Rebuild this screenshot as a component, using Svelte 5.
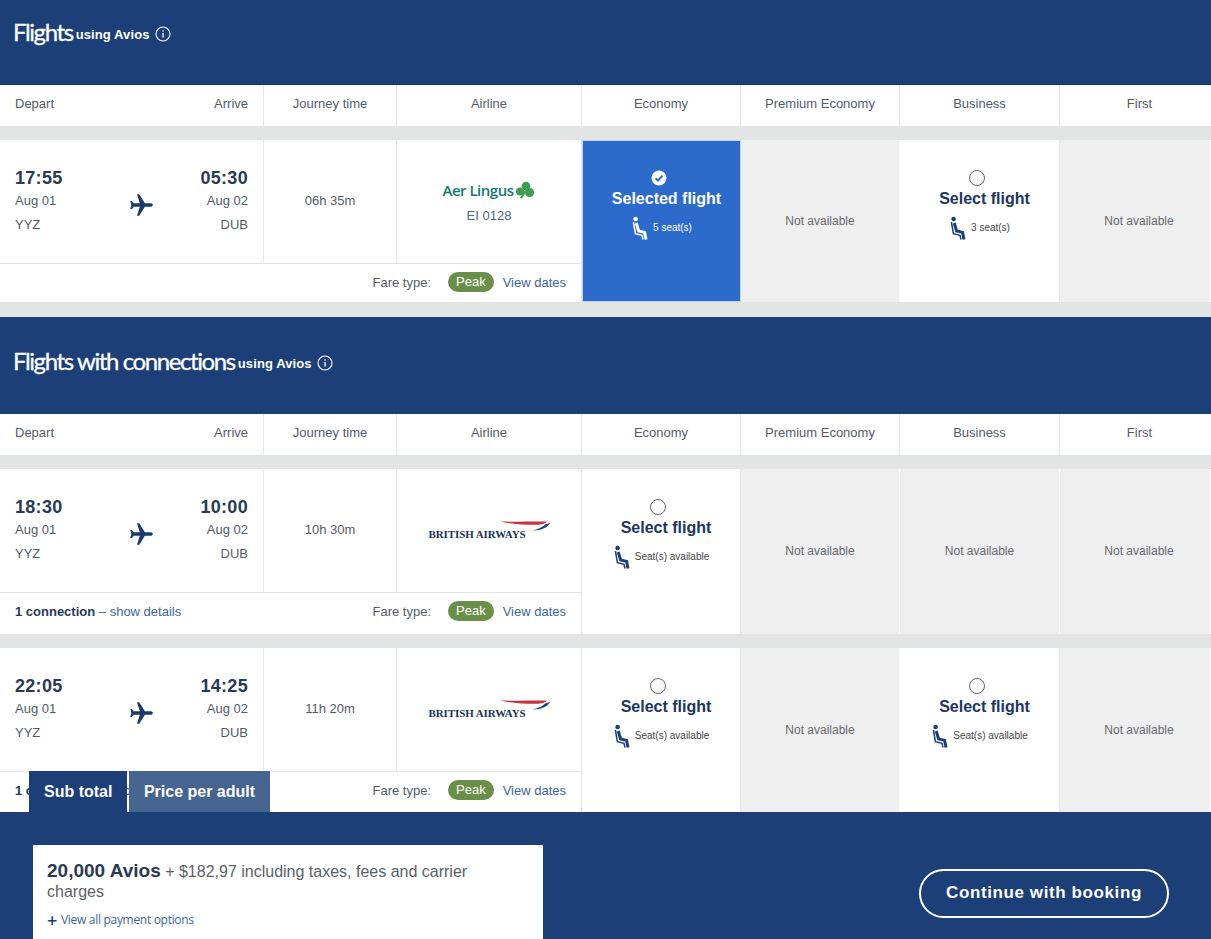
<script>
  const columns = ["Journey time", "Airline", "Economy", "Premium Economy", "Business", "First"];

  const direct = [
    {
      depart: "17:55",
      arrive: "05:30",
      duration: "06h 35m",
      airline: "aer",
      fares: [{ state: "selected", seats: "5 seat(s)" }, null, { state: "open", seats: "3 seat(s)" }, null],
    },
  ];

  const connecting = [
    {
      depart: "18:30",
      arrive: "10:00",
      duration: "10h 30m",
      airline: "ba",
      connection: true,
      tall: true,
      fares: [{ state: "open", seats: "Seat(s) available" }, null, null, null],
    },
    {
      depart: "22:05",
      arrive: "14:25",
      duration: "11h 20m",
      airline: "ba",
      connection: true,
      fares: [{ state: "open", seats: "Seat(s) available" }, null, { state: "open", seats: "Seat(s) available" }, null],
    },
  ];

  const planePath =
    "M21 16v-2l-8-5V3.5c0-.83-.67-1.5-1.5-1.5S10 2.67 10 3.5V9l-8 5v2l8-2.5V19l-2 1.5V22l3.5-1 3.5 1v-1.5L13 19v-5.5l8 2.5z";
</script>

{#snippet info()}
  <svg class="info" viewBox="0 0 16 16" width="16" height="16" aria-hidden="true">
    <circle cx="8" cy="8" r="7" fill="none" stroke="currentColor" stroke-width="1.1" />
    <rect x="7.4" y="7" width="1.3" height="4.6" fill="currentColor" />
    <rect x="7.4" y="4.2" width="1.3" height="1.4" fill="currentColor" />
  </svg>
{/snippet}

{#snippet seat()}
  <svg class="seat" viewBox="0 0 16 24" width="16" height="24" aria-hidden="true">
    <circle cx="3.6" cy="3" r="2.3" fill="currentColor" />
    <path d="M1.4 6 L3.4 17.6 L10 19.4 L11 23.5" fill="none" stroke="currentColor" stroke-width="1.5" />
    <path d="M4.2 7 L6.6 15 L12.6 16.4 L14 23.5" fill="none" stroke="currentColor" stroke-width="3" />
  </svg>
{/snippet}

{#snippet tableHead()}
  <div class="grid head">
    <div class="cell times-head"><span>Depart</span><span>Arrive</span></div>
    {#each columns as c}
      <div class="cell">{c}</div>
    {/each}
  </div>
{/snippet}

{#snippet flightRow(f)}
  <div class="strip"></div>
  <div class="grid row" class:tall={f.tall} class:connected={f.connection}>
    <div class="info-block">
      <div class="upper">
        <div class="times">
          <div class="end">
            <strong>{f.depart}</strong>
            <span>Aug 01</span>
            <span>YYZ</span>
          </div>
          <svg class="plane" viewBox="0 0 24 24" width="27" height="27" aria-hidden="true">
            <path d={planePath} fill="#1b3a6b" transform="rotate(90 12 12)" />
          </svg>
          <div class="end right">
            <strong>{f.arrive}</strong>
            <span>Aug 02</span>
            <span>DUB</span>
          </div>
        </div>
        <div class="duration">{f.duration}</div>
        <div class="airline">
          {#if f.airline === "aer"}
            <div class="aer">
              Aer Lingus
              <svg viewBox="0 0 20 18" width="20" height="18" aria-hidden="true">
                <g fill="#3f9e4c">
                  <circle cx="11" cy="5" r="4.3" />
                  <circle cx="5" cy="10.5" r="4" />
                  <circle cx="14.5" cy="11.5" r="4.6" />
                  <path d="M9 10 L5 17 L7 17.5 L11 11 Z" />
                </g>
              </svg>
            </div>
            <div class="code">EI 0128</div>
          {:else}
            <div class="ba">
              <span>BRITISH AIRWAYS</span>
              <svg viewBox="0 0 50 18" width="50" height="18" aria-hidden="true">
                <path d="M0 1.5 C14 2 34 1.2 47 1.5 C46 3 42 4.8 36 4.8 C22 4.8 10 3.5 0 1.5 Z" fill="#c8323f" />
                <path d="M50 3 C48 7 42 10.5 32 10.5 C38 9.5 43 7 45 4.5 Z" fill="#1d3f78" />
              </svg>
            </div>
          {/if}
        </div>
      </div>
      <div class="fare-row">
        {#if f.connection}
          <div class="connection"><b>1 connection</b> – <span>show details</span></div>
        {/if}
        <span class="fare-label">Fare type:</span>
        <span class="peak">Peak</span>
        <span class="dates">View dates</span>
      </div>
    </div>
    {#each f.fares as fare}
      {#if !fare}
        <div class="fare none">Not available</div>
      {:else}
        <div class="fare" class:selected={fare.state === "selected"}>
          {#if fare.state === "selected"}
            <svg class="radio" viewBox="0 0 16 16" width="16" height="16" aria-hidden="true">
              <circle cx="8" cy="8" r="7.5" fill="#fff" />
              <path d="M4.6 8.2 L7 10.6 L11.4 5.6" fill="none" stroke="#2c6bcc" stroke-width="2" />
            </svg>
          {:else}
            <span class="radio empty"></span>
          {/if}
          <div class="fare-title">{fare.state === "selected" ? "Selected flight" : "Select flight"}</div>
          <div class="seats">
            {@render seat()}
            <span>{fare.seats}</span>
          </div>
        </div>
      {/if}
    {/each}
  </div>
{/snippet}

<div class="page">
  <header class="section first">
    <h2>Flights</h2>
    <span class="using">using Avios</span>
    {@render info()}
  </header>
  {@render tableHead()}
  {#each direct as f}
    {@render flightRow(f)}
  {/each}
  <div class="strip gap"></div>

  <header class="section second">
    <h2>Flights with connections</h2>
    <span class="using">using Avios</span>
    {@render info()}
  </header>
  {@render tableHead()}
  {#each connecting as f}
    {@render flightRow(f)}
  {/each}

  <footer>
    <div class="tabs">
      <div class="tab active">Sub total</div>
      <div class="tab">Price per adult</div>
    </div>
    <div class="price-card">
      <p><strong>20,000 Avios</strong> + $182,97 including taxes, fees and carrier charges</p>
      <div class="payment"><span class="plus">+</span> View all payment options</div>
    </div>
    <button class="continue">Continue with booking</button>
  </footer>
</div>

<style>
  :global(body) {
    margin: 0;
    background: #fff;
    font-family: "Liberation Sans", Arial, sans-serif;
    color: #555b66;
  }

  .page {
    width: 1211px;
    height: 939px;
    overflow: hidden;
  }

  .section {
    display: flex;
    align-items: center;
    gap: 3px;
    box-sizing: border-box;
    padding-left: 13px;
    background: #1b3f76;
    color: #fff;
  }

  .section.first {
    height: 85px;
    padding-bottom: 21px;
    border-bottom: 1px solid #16335f;
  }

  .section.second {
    height: 97px;
    padding-bottom: 11px;
  }

  h2 {
    margin: 0;
    font-family: Lato, sans-serif;
    font-weight: 400;
    font-size: 24px;
    letter-spacing: -1.4px;
    color: #fff;
    -webkit-text-stroke: 0.3px #fff;
  }

  .using {
    font-size: 13px;
    font-weight: 700;
    letter-spacing: 0.1px;
    margin-top: 6px;
  }

  .info {
    margin: 5px 0 0 2px;
  }

  .grid {
    display: grid;
    grid-template-columns: 264px 133px 185px 159px 159px 160px 151px;
  }

  .head {
    height: 41px;
    font-size: 13px;
    color: #555b66;
  }

  .cell {
    display: flex;
    align-items: center;
    justify-content: center;
    padding-bottom: 4px;
    box-sizing: border-box;
    border-right: 1px solid #e8e8e8;
  }

  .cell:last-child {
    border-right: 0;
    padding-left: 8px;
  }

  .times-head {
    justify-content: space-between;
    padding-left: 15px;
    padding-right: 15px;
  }

  .strip {
    height: 14px;
    background: #e3e4e4;
  }

  .strip.gap {
    height: 15px;
  }

  .row {
    height: 162px;
  }

  .row.tall {
    height: 165px;
  }

  .row.connected:not(.tall) {
    height: 164px;
  }

  .info-block {
    grid-column: 1 / 4;
    display: flex;
    flex-direction: column;
    border-right: 1px solid #e8e8e8;
  }

  .upper {
    display: grid;
    grid-template-columns: 264px 133px 1fr;
    height: 124px;
    box-sizing: border-box;
    border-bottom: 1px solid #e4e4e4;
    flex: none;
  }

  .times {
    display: flex;
    justify-content: space-between;
    align-items: center;
    padding: 0 15px;
    border-right: 1px solid #e8e8e8;
  }

  .end {
    display: flex;
    flex-direction: column;
    font-size: 13px;
    width: 70px;
    margin-top: 2px;
  }

  .end strong {
    font-size: 18px;
    line-height: 21px;
    color: #2a3a55;
    letter-spacing: 0.3px;
  }

  .end span {
    line-height: 24px;
  }

  .end.right {
    align-items: flex-end;
  }

  .plane {
    margin: 7px 0 0 20px;
  }

  .duration {
    display: flex;
    align-items: center;
    justify-content: center;
    font-size: 13px;
    border-right: 1px solid #e8e8e8;
    padding-bottom: 3px;
  }

  .airline {
    display: flex;
    flex-direction: column;
    align-items: center;
    justify-content: center;
  }

  .aer {
    display: flex;
    align-items: center;
    gap: 2px;
    margin-top: -1px;
    font-family: "Open Sans", sans-serif;
    font-size: 15px;
    letter-spacing: -0.5px;
    font-weight: 600;
    color: #117a6a;
  }

  .code {
    margin-top: 8px;
    font-size: 13px;
    color: #567;
  }

  .ba {
    display: flex;
    align-items: flex-start;
    margin-bottom: 2px;
  }

  .ba span {
    font-family: "Liberation Serif", serif;
    font-weight: 700;
    font-size: 11px;
    color: #1d3358;
    margin-top: 8px;
    white-space: nowrap;
    letter-spacing: -0.1px;
  }

  .ba svg {
    margin-left: -26px;
  }

  .fare-row {
    flex: 1;
    display: flex;
    align-items: center;
    justify-content: flex-end;
    padding-right: 15px;
    padding-bottom: 2px;
    font-size: 13px;
  }

  .connected .fare-row {
    padding-bottom: 4px;
  }

  .tall .fare-row {
    padding-bottom: 5px;
  }

  .connection {
    margin-right: auto;
    padding-left: 15px;
    color: #3e6699;
  }

  .connection b {
    color: #2a3a55;
  }

  .peak {
    margin: 0 9px 0 17px;
    padding: 0 8px;
    line-height: 20px;
    border-radius: 10px;
    background: #6a8f48;
    color: #fff;
  }

  .dates {
    color: #3e6699;
  }

  .fare {
    display: flex;
    flex-direction: column;
    align-items: center;
    box-sizing: border-box;
    padding: 30px 0 0 10px;
    border-right: 1px solid #e8e8e8;
    color: #20365f;
  }

  .fare:last-child {
    border-right: 0;
  }

  .fare.none {
    justify-content: center;
    padding: 0;
    background: #efefef;
    border-right: 1px solid #fff;
    font-size: 12px;
    color: #66696e;
  }

  .tall .fare.none {
    padding-bottom: 2px;
  }

  .fare.none:last-child {
    padding-left: 8px;
  }

  .fare.selected {
    padding-top: 29px;
    background: #2c6bcc;
    color: #fff;
    border: 1px solid #bcd4f0;
  }

  .radio {
    display: block;
    margin-right: 16px;
    height: 16px;
  }

  .radio.empty {
    box-sizing: border-box;
    width: 16px;
    border: 1px solid #666;
    border-radius: 50%;
    background: #fff;
  }

  .fare-title {
    margin-top: 3px;
    font-size: 16px;
    line-height: 19px;
    font-weight: 700;
  }

  .seats {
    display: flex;
    align-items: center;
    gap: 5px;
    margin: 6px 9px 0 0;
    font-size: 10px;
    color: #444;
  }

  .selected .seats {
    color: #fff;
  }

  .seat {
    color: #1b3f76;
    margin-top: 2px;
  }

  .selected .seat {
    color: #fff;
  }

  footer {
    position: relative;
    display: flex;
    justify-content: space-between;
    box-sizing: border-box;
    height: 128px;
    padding: 33px 42px 0 33px;
    background: #1b3f76;
  }

  .tabs {
    position: absolute;
    left: 29px;
    top: -41px;
    display: flex;
    gap: 2px;
  }

  .tab {
    height: 41px;
    box-sizing: border-box;
    padding: 0 14.5px;
    line-height: 41px;
    font-size: 16px;
    font-weight: 700;
    color: #fff;
    background: #45648f;
  }

  .tab.active {
    padding: 0 15px;
    background: #1b3f76;
  }

  .price-card {
    width: 510px;
    box-sizing: border-box;
    padding: 16px 30px 16px 14px;
    background: #fff;
  }

  .price-card p {
    margin: 0;
    font-size: 16px;
    line-height: 20px;
    color: #5b5f66;
  }

  .price-card strong {
    font-size: 19px;
    color: #2a3a55;
  }

  .payment {
    display: flex;
    align-items: center;
    gap: 4px;
    margin-top: 9px;
    font-family: "Open Sans", sans-serif;
    font-size: 12px;
    letter-spacing: -0.3px;
    color: #3e6699;
  }

  .plus {
    font-size: 18px;
    font-weight: 600;
    line-height: 16px;
    color: #1b3f76;
  }

  .continue {
    align-self: flex-start;
    width: 250px;
    height: 49px;
    margin-top: 24px;
    padding-bottom: 3px;
    font-family: "Liberation Sans", Arial, sans-serif;
    font-size: 17px;
    font-weight: 700;
    letter-spacing: 0.6px;
    color: #fff;
    background: transparent;
    border: 2px solid #fff;
    border-radius: 25px;
  }
</style>
